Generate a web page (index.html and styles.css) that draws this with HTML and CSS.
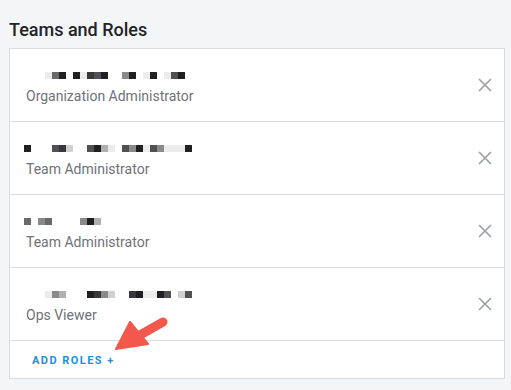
FILE: index.html
```html
<!DOCTYPE html>
<html lang="en">
<head>
    <meta charset="UTF-8">
    <meta name="viewport" content="width=device-width, initial-scale=1.0">
    <title>Teams and Roles</title>
    <link rel="stylesheet" href="styles.css">
</head>
<body>
    <div class="container">
        <h2 class="title">Teams and Roles</h2>
        <div class="card">
            <div class="role-row">
                <div class="role-info">
                    <div class="name-mask indent">
                        <i class="c1"></i><i class="c5"></i><i class="c8"></i><i class="gap"></i><i class="c8"></i><i class="c1"></i><i class="c7"></i><i class="c6"></i><i class="c8"></i><i class="gap"></i><i class="gap"></i><i class="c4"></i><i class="c8"></i><i class="gap"></i><i class="c1"></i><i class="c8"></i><i class="gap"></i><i class="c1"></i><i class="c6"></i><i class="c8"></i>
                    </div>
                    <div class="role-name">Organization Administrator</div>
                </div>
                <button class="remove-btn"><svg width="14" height="14" viewBox="0 0 14 14"><path d="M1 1L13 13M13 1L1 13"/></svg></button>
            </div>
            <div class="role-row">
                <div class="role-info">
                    <div class="name-mask">
                        <i class="c8"></i><i class="gap"></i><i class="gap"></i><i class="gap"></i><i class="c6"></i><i class="c7"></i><i class="c2"></i><i class="gap"></i><i class="gap"></i><i class="c6"></i><i class="c8"></i><i class="c3"></i><i class="c1"></i><i class="gap"></i><i class="c6"></i><i class="c4"></i><i class="c8"></i><i class="c1"></i><i class="c6"></i><i class="c4"></i><i class="c1"></i><i class="c1"></i><i class="c1"></i><i class="c8"></i>
                    </div>
                    <div class="role-name">Team Administrator</div>
                </div>
                <button class="remove-btn"><svg width="14" height="14" viewBox="0 0 14 14"><path d="M1 1L13 13M13 1L1 13"/></svg></button>
            </div>
            <div class="role-row">
                <div class="role-info">
                    <div class="name-mask">
                        <i class="c5"></i><i class="gap"></i><i class="c4"></i><i class="c5"></i><i class="gap"></i><i class="gap"></i><i class="gap"></i><i class="gap"></i><i class="c4"></i><i class="c8"></i><i class="c3"></i>
                    </div>
                    <div class="role-name">Team Administrator</div>
                </div>
                <button class="remove-btn"><svg width="14" height="14" viewBox="0 0 14 14"><path d="M1 1L13 13M13 1L1 13"/></svg></button>
            </div>
            <div class="role-row">
                <div class="role-info">
                    <div class="name-mask indent">
                        <i class="c1"></i><i class="c4"></i><i class="c3"></i><i class="gap"></i><i class="gap"></i><i class="gap"></i><i class="c8"></i><i class="c7"></i><i class="c4"></i><i class="c2"></i><i class="gap"></i><i class="gap"></i><i class="c7"></i><i class="c8"></i><i class="c1"></i><i class="c1"></i><i class="c8"></i><i class="c6"></i><i class="gap"></i><i class="c2"></i><i class="c6"></i>
                    </div>
                    <div class="role-name">Ops Viewer</div>
                </div>
                <button class="remove-btn"><svg width="14" height="14" viewBox="0 0 14 14"><path d="M1 1L13 13M13 1L1 13"/></svg></button>
            </div>
            <div class="card-footer">
                <a class="add-link" href="#">ADD ROLES +</a>
            </div>
            <svg class="arrow" width="80" height="55" viewBox="0 0 80 55">
                <path d="M40 30 L63 17" stroke="#f2584b" stroke-width="9" stroke-linecap="round" fill="none"/>
                <path d="M16 44 L30 17 L48 39 Z" fill="#f2584b" stroke="#f2584b" stroke-width="2" stroke-linejoin="round"/>
            </svg>
        </div>
    </div>
</body>
</html>
```

FILE: styles.css
```css
body {
    font-family: Roboto, "Liberation Sans", sans-serif;
    margin: 0;
    padding: 0;
    background-color: #f4f5f7;
}

.container {
    padding: 0 6px 0 9px;
}

.title {
    font-size: 18px;
    font-weight: 500;
    color: #222326;
    margin: 0;
    padding-top: 19px;
    line-height: 22px;
    height: 29px;
}

.card {
    position: relative;
    background-color: #fff;
    border: 1px solid #dcdcdc;
    box-sizing: border-box;
    width: 496px;
}

.role-row {
    display: flex;
    align-items: flex-start;
    justify-content: space-between;
    height: 72px;
    border-bottom: 1px solid #dcdcdc;
    padding: 0 12px 0 14px;
}

.role-info {
    padding-top: 23px;
}

.name-mask {
    display: flex;
    height: 7px;
    margin-bottom: 8px;
}
.name-mask.indent {
    margin-left: 21px;
}
.name-mask i {
    display: block;
    width: 7px;
    height: 7px;
}
.name-mask .gap { background: transparent; }
.name-mask .c1 { background: #ececec; }
.name-mask .c2 { background: #d0d0d0; }
.name-mask .c3 { background: #b0b0b0; }
.name-mask .c4 { background: #8a8a8a; }
.name-mask .c5 { background: #6a6a6a; }
.name-mask .c6 { background: #505055; }
.name-mask .c7 { background: #38383c; }
.name-mask .c8 { background: #1f1f24; }

.role-name {
    font-size: 14px;
    line-height: 18px;
    color: #707179;
    padding-left: 2px;
}

.remove-btn {
    background: none;
    border: none;
    padding: 0;
    margin-top: 29px;
    width: 14px;
    height: 14px;
    cursor: pointer;
}
.remove-btn path {
    stroke: #9ba1ab;
    stroke-width: 1.7;
}

.card-footer {
    height: 37px;
    display: flex;
    align-items: center;
    padding-left: 22px;
}

.add-link {
    font-size: 11px;
    font-weight: 700;
    letter-spacing: 1.45px;
    color: #1a8fe6;
    text-decoration: none;
    padding-top: 2px;
}

.arrow {
    position: absolute;
    left: 90px;
    top: 256px;
}
```
